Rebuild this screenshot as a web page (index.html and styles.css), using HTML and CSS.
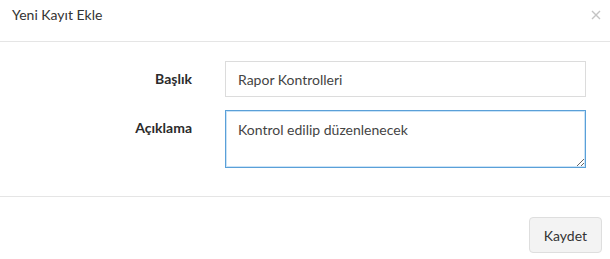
FILE: index.html
```html
<!DOCTYPE html>
<html lang="tr">
<head>
  <meta charset="UTF-8">
  <meta name="viewport" content="width=device-width, initial-scale=1.0">
  <title>Yeni Kayıt Ekle</title>
  <link rel="stylesheet" href="styles.css">
</head>
<body>
  <div class="modal">
    <div class="modal-header">
      <h4 class="modal-title">Yeni Kayıt Ekle</h4>
      <button class="close" type="button" aria-label="Kapat">
        <svg viewBox="0 0 10 10" width="10" height="10">
          <path d="M1 1L9 9M9 1L1 9"/>
        </svg>
      </button>
    </div>

    <div class="modal-body">
      <form class="form">
        <label class="form-label" for="baslik">Başlık</label>
        <input class="form-input" id="baslik" type="text" value="Rapor Kontrolleri">

        <label class="form-label" for="aciklama">Açıklama</label>
        <textarea class="form-input form-textarea" id="aciklama">Kontrol edilip düzenlenecek</textarea>
      </form>
    </div>

    <div class="modal-footer">
      <button class="btn" type="button">Kaydet</button>
    </div>
  </div>
</body>
</html>
```

FILE: styles.css
```css
body {
  margin: 0;
  font-family: 'Lato', 'Open Sans', sans-serif;
  font-size: 14px;
  color: #333;
  background: #fff;
}
.modal {
  width: 610px;
}
.modal-header {
  display: flex;
  justify-content: space-between;
  align-items: center;
  padding: 6px 9px 17px 12px;
  border-bottom: 1px solid #e5e5e5;
}
.modal-title {
  margin: 0;
  font-size: 14px;
  font-weight: 400;
  line-height: 18px;
  color: #333;
}
.close {
  display: flex;
  padding: 0;
  border: none;
  background: none;
  cursor: pointer;
}
.close svg {
  stroke: #c4c4c4;
  stroke-width: 1.4;
  fill: none;
}
.modal-body {
  padding: 19px 24px 28px 0;
}
.form {
  display: grid;
  grid-template-columns: 192px 1fr;
  column-gap: 33px;
  row-gap: 13px;
}
.form-label {
  text-align: right;
  font-weight: 700;
  line-height: 20px;
  padding-top: 8px;
  color: #2b2b2b;
}
.form-input {
  box-sizing: border-box;
  height: 36px;
  margin: 0;
  padding: 0 12px;
  border: 1px solid #dcdcdc;
  border-radius: 0;
  font-family: inherit;
  font-size: 14px;
  color: #444;
  outline: none;
}
.form-textarea {
  height: 58px;
  padding: 9px 12px;
  line-height: 20px;
  resize: vertical;
  border-color: #5aa0d8;
  box-shadow: inset 0 0 0 1px rgba(102, 175, 233, 0.35);
}
.modal-footer {
  display: flex;
  justify-content: flex-end;
  padding: 20px 8px 6px;
  border-top: 1px solid #e5e5e5;
}
.btn {
  height: 36px;
  padding: 0 14px;
  border: 1px solid #dedede;
  border-radius: 4px;
  background: #f3f3f3;
  font-family: inherit;
  font-size: 14px;
  color: #333;
  cursor: pointer;
}
```
